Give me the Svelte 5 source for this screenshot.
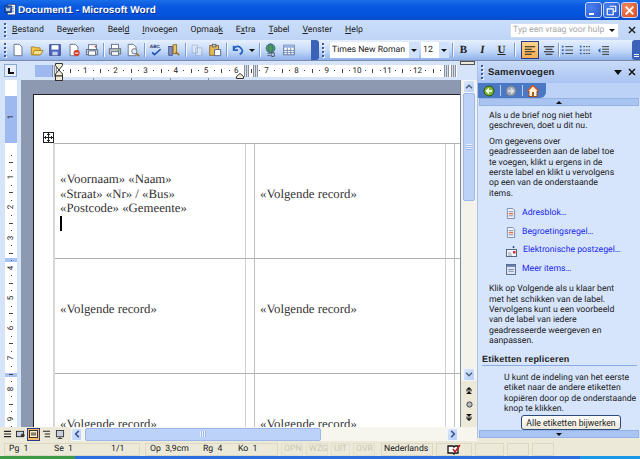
<script>
  const menus = [
    ['', 'B', 'estand'], ['Be', 'w', 'erken'], ['Beel', 'd', ''], ['', 'I', 'nvoegen'], ['Opmaa', 'k', ''],
    ['E', 'x', 'tra'], ['', 'T', 'abel'], ['', 'V', 'enster'], ['', 'H', 'elp'],
  ];
  const hnums = [1, 2, 3, 4, 5, 6, 7, 8, 9, 10, 11, 12];
  const step = 30.2;
  // quarter marks on the rulers, numbers sit on every fourth one
  const hticks = Array.from({ length: 52 }, (_, i) => i).filter((i) => i % 4 !== 0);
  const vticks = Array.from({ length: 44 }, (_, i) => i).filter((i) => i % 4 !== 0);
  const rows = [
    ['first', 'next', 'edge'],
    ['next', 'next', 'edge'],
    ['next', 'next', 'edge'],
  ];
  const links = [
    { label: 'Adresblok…', kind: 'doc' },
    { label: 'Begroetingsregel…', kind: 'doc' },
    { label: 'Elektronische postzegel…', kind: 'stamp' },
    { label: 'Meer items…', kind: 'more' },
  ];
  const locks = [
    { text: 'OPN', width: 22 },
    { text: 'WZG', width: 22 },
    { text: 'UIT', width: 19 },
    { text: 'OVR', width: 22 },
  ];
</script>

{#snippet grip()}
  <span class="grip"><i></i><i></i><i></i><i></i></span>
{/snippet}

<div class="window">
  <header class="title">
    <svg width="13" height="14" viewBox="0 0 16 16">
      <rect x="4" y="1" width="10" height="13" fill="#fff" stroke="#26407a"/>
      <path d="M6 4h6M6 6h6M6 8h6M6 10h6" stroke="#5a78b0"/>
      <rect x="1" y="3" width="8" height="8" fill="#2a5cb0" stroke="#12306a"/>
      <path d="M2.5 5l1.3 4 1.2-3 1.2 3 1.3-4" fill="none" stroke="#fff"/>
    </svg>
    <span class="title-text">Document1 - Microsoft Word</span>
    <div class="win-btns">
      <span class="wb"><i class="min"></i></span>
      <span class="wb"><svg width="11" height="11" viewBox="0 0 13 13"><path d="M4.5 1.5h7v6h-2M1.5 4.5h7v7h-7z" fill="none" stroke="#fff" stroke-width="1.4"/></svg></span>
      <span class="wb close"><svg width="11" height="11" viewBox="0 0 13 13"><path d="M2 2l9 9M11 2l-9 9" stroke="#fff" stroke-width="2.2"/></svg></span>
    </div>
  </header>

  <nav class="menu">
    {@render grip()}
    {#each menus as [a, k, b]}
      <span class="mi">{a}<u>{k}</u>{b}</span>
    {/each}
    <span class="help-box"><span>Typ een vraag voor hulp</span><b class="dd"></b></span>
    <svg class="menu-x" width="8" height="8" viewBox="0 0 9 9"><path d="M1 1l7 7M8 1l-7 7" stroke="#222" stroke-width="1.6"/></svg>
  </nav>

  <div class="toolbar">
    {@render grip()}
    <div class="tools std">
      <svg width="14" height="14" viewBox="0 0 16 16"><path d="M3.5 1.5h6l3 3v10h-9z" fill="#fff" stroke="#5a6a80"/></svg>
      <svg width="14" height="14" viewBox="0 0 16 16"><path d="M1.5 13.5v-9h4l1 1h5v8z" fill="#f5c84c" stroke="#a67a18"/><path d="M3 13.5l2-5h10l-3 5z" fill="#fbe08c" stroke="#a67a18"/></svg>
      <svg width="14" height="14" viewBox="0 0 16 16"><rect x="2" y="2" width="12" height="12" fill="#5068c0" stroke="#2c3a80"/><rect x="4" y="2.5" width="8" height="5" fill="#fff"/><rect x="5" y="10" width="6" height="4" fill="#c8d0e8"/></svg>
      <svg width="14" height="14" viewBox="0 0 16 16"><path d="M3.5 1.5h6l3 3v10h-9z" fill="#fff" stroke="#5a6a80"/><circle cx="11" cy="11.5" r="3.5" fill="#d83a28"/><rect x="9" y="11" width="4" height="1.2" fill="#fff"/></svg>
      <svg width="14" height="14" viewBox="0 0 16 16"><rect x="4" y="2" width="9" height="6" fill="#fff" stroke="#5a6a80"/><rect x="1.5" y="7.5" width="13" height="6" fill="#c0c8d8" stroke="#5a6a80"/><rect x="4" y="9" width="8" height="5" fill="#fff" stroke="#5a6a80"/><circle cx="12" cy="4" r="1" fill="#d83a28"/></svg>
      <i class="sep"></i>
      <svg width="14" height="14" viewBox="0 0 16 16"><rect x="4" y="1.5" width="8" height="6" fill="#fff" stroke="#606a7a"/><rect x="1.5" y="6.5" width="13" height="6" fill="#b8bec8" stroke="#606a7a"/><rect x="4" y="10" width="8" height="4" fill="#fff" stroke="#606a7a"/><circle cx="12" cy="8.5" r="1" fill="#30b030"/></svg>
      <svg width="14" height="14" viewBox="0 0 16 16"><path d="M2.5 1.5h6l3 3v10h-9z" fill="#fff" stroke="#5a6a80"/><circle cx="9.5" cy="9.5" r="3" fill="#dcebff" stroke="#6a6a6a"/><path d="M12 12l3 3" stroke="#a06a20" stroke-width="2"/></svg>
      <i class="sep"></i>
      <svg width="14" height="14" viewBox="0 0 18 16"><text x="1" y="6" font-size="6" font-family="Liberation Sans" font-weight="700" fill="#1c2a60">ABC</text><path d="M4 11l3 3 8-7" fill="none" stroke="#2050b0" stroke-width="2"/></svg>
      <svg width="14" height="14" viewBox="0 0 16 16"><rect x="2" y="4" width="4" height="10" fill="#8890c8" stroke="#40487a"/><rect x="7" y="2" width="4" height="10" fill="#e8c468" stroke="#8a6a20"/><path d="M10 10l4 4" stroke="#a07020" stroke-width="2"/></svg>
      <i class="sep"></i>
      <svg class="off" width="14" height="14" viewBox="0 0 16 16"><path d="M2.5 2.5h6v9h-6zM6.5 5.5h7v9h-7z" fill="#eef2fa" stroke="#8a9ab4"/></svg>
      <svg width="14" height="14" viewBox="0 0 16 16"><rect x="2" y="3" width="10" height="11" fill="#e8b850" stroke="#80602a"/><rect x="5" y="1.5" width="4" height="3" fill="#c8c8c8" stroke="#606060"/><path d="M7.5 7.5h7v7h-7z" fill="#fff" stroke="#4a5a80"/></svg>
      <i class="sep"></i>
      <svg width="14" height="14" viewBox="0 0 16 16"><path d="M3 8a4.5 4.5 0 0 1 7.5-3L13 8M3 3v5h5M13 8a5 5 0 0 1-3 5" fill="none" stroke="#2a64c0" stroke-width="2"/></svg>
      <b class="dd"></b>
      <i class="sep"></i>
      <svg width="14" height="14" viewBox="0 0 16 16"><circle cx="7.5" cy="6" r="5" fill="#4f9c58" stroke="#2e6090"/><ellipse cx="7.5" cy="6" rx="2.2" ry="5" fill="none" stroke="#2e6090" stroke-width=".7"/><path d="M4 12a2 2 0 0 1 3 0M8 13a2 2 0 0 1 4 0M4 14a2 2 0 0 0 3 0M8 13.5a2 2 0 0 0 4 0" fill="none" stroke="#505a68" stroke-width="1.2"/></svg>
      <svg width="14" height="14" viewBox="0 0 16 16"><rect x="2" y="2.5" width="12" height="11" fill="#fff" stroke="#50658a"/><rect x="2" y="2.5" width="12" height="3" fill="#9ab4de"/><path d="M2 8.5h12M2 11h12M6 5.5v8M10 5.5v8" stroke="#6a82aa"/></svg>
    </div>
    <span class="more"></span>
    {@render grip()}
    <span class="combo font"><span>Times New Roman</span><span class="drop"><b class="dd"></b></span></span>
    <span class="combo size"><span>12</span><span class="drop"><b class="dd"></b></span></span>
    <i class="sep plain"></i>
    <div class="tools fmt">
      <span class="fb bold">B</span>
      <span class="fb ital">I</span>
      <span class="fb und">U</span>
      <i class="sep plain"></i>
      <span class="active"><svg width="12" height="11" viewBox="0 0 14 12"><path d="M1 1.5h12M1 4.5h8M1 7.5h12M1 10.5h8" stroke="#222" stroke-width="1.2"/></svg></span>
      <svg width="12" height="11" viewBox="0 0 14 12"><path d="M1 1.5h12M3 4.5h8M1 7.5h12M3 10.5h8" stroke="#222" stroke-width="1.2"/></svg>
      <i class="sep tight"></i>
      <svg width="12" height="11" viewBox="0 0 14 12"><path d="M5 1.5h9M5 5.5h9M5 9.5h9" stroke="#444" stroke-width="1.1"/><path d="M1 .5h2v2H1zM1 4.5h2v2H1zM1 8.5h2v2H1z" fill="#2a64c0"/></svg>
      <svg width="12" height="11" viewBox="0 0 14 12"><path d="M5 1.5h9M5 5.5h9M5 9.5h9" stroke="#444" stroke-width="1.1" stroke-dasharray="2 1"/><path d="M1 .5h2v2H1zM1 4.5h2v2H1zM1 8.5h2v2H1z" fill="#2a64c0"/></svg>
      <svg width="12" height="11" viewBox="0 0 14 12"><path d="M6 1.5h8M6 4.5h8M6 7.5h8M6 10.5h8" stroke="#333" stroke-width="1.1"/><path d="M1 6l3-3v6z" fill="#2a64c0"/></svg>
    </div>
    <span class="more end"><i></i><i></i></span>
  </div>

  <div class="main">
    <div class="doc">
      <div class="ruler-row">
        <span class="tab-stop"><svg width="8" height="8" viewBox="0 0 8 8"><path d="M2 1v5h5" fill="none" stroke="#111" stroke-width="2"/></svg></span>
        <div class="hruler">
          <div class="hr-margin"></div>
          {#each hnums as n}
            <span class="hr-num" style:left="{n * step + 20}px">{n}</span>
          {/each}
          {#each hticks as i}
            <i class="hr-tick" class:long={i % 4 === 2} style:left="{(i / 4) * step + 20}px"></i>
          {/each}
          {#each [58, 96, 135, 173] as x}
            <i class="tabmark" style:left="{x}px"></i>
          {/each}
          <span class="cell-mark" style:left="17px"></span>
          <span class="cell-mark" style:left="209px"></span>
          <span class="cell-mark" style:left="218px"></span>
          <span class="cell-mark" style:left="409px"></span>
          <span class="cell-mark" style:left="416px"></span>
          <svg class="hourglass" width="8" height="18" viewBox="0 0 8 18"><path d="M.5.5h7v2L4 7 .5 2.500zM4 7l3.500 4v2h-7v-2z" fill="#f2ecd6" stroke="#333"/><rect x=".5" y="13" width="7" height="4.500" fill="#f2ecd6" stroke="#333"/></svg>
          <svg class="rindent" width="8" height="6" viewBox="0 0 8 6"><path d="M.5 5.500v-2L4 .5l3.500 3v2z" fill="#f2ecd6" stroke="#333"/></svg>
        </div>
        <span class="split"></span>
      </div>

      <div class="doc-mid">
        <div class="vruler">
          <div class="vr-margin"></div>
          <div class="vr-row" style:top="178px"></div>
          <div class="vr-row" style:top="293px"></div>
          <span class="vr-num" style:top="18px">1</span>
          {#each [1, 2, 3, 4, 5, 6, 7, 8, 9] as n}
            <span class="vr-num" style:top="{n * step + 48}px">{n}</span>
          {/each}
          {#each vticks as i}
            <i class="vr-tick" class:long={i % 4 === 2} style:top="{(i / 4) * step + 48}px"></i>
          {/each}
        </div>
        <div class="view">
          <div class="sheet">
            <span class="move">
              <svg width="9" height="9" viewBox="0 0 9 9"><path d="M4.500 0v9M0 4.500h9M3 1.500h3M3 7.500h3M1.500 3v3M7.500 3v3" stroke="#222"/></svg>
            </span>
            <div class="labels">
              {#each rows as row}
                {#each row as cell}
                  <div class="label {cell}">
                    {#if cell === 'first'}
                      <p>«Voornaam» «Naam»</p>
                      <p>«Straat» «Nr» / «Bus»</p>
                      <p>«Postcode» «Gemeente»</p>
                      <i class="caret"></i>
                    {:else if cell === 'next'}
                      <p>«Volgende record»</p>
                    {:else}
                      <p>«</p>
                    {/if}
                  </div>
                {/each}
              {/each}
            </div>
          </div>
        </div>
        <div class="vscroll">
          <span class="sb-btn"><svg width="8" height="5" viewBox="0 0 9 6"><path d="M1 5l3.500-3.500L8 5" fill="none" stroke="#4d6185" stroke-width="1.800"/></svg></span>
          <span class="sb-thumb"><i></i></span>
          <span class="sb-track"></span>
          <span class="sb-btn"><svg width="8" height="5" viewBox="0 0 9 6"><path d="M1 1l3.500 3.500L8 1" fill="none" stroke="#4d6185" stroke-width="1.800"/></svg></span>
          <div class="browse">
            <svg width="6" height="7" viewBox="0 0 7 8"><path d="M3.500 0L7 3H0zM0 4h7v1H0zM3.500 5L7 8H0z" fill="#111"/></svg>
            <svg width="7" height="7" viewBox="0 0 8 8"><circle cx="4" cy="4" r="3" fill="#b4bcc8" stroke="#333"/></svg>
            <svg width="6" height="7" viewBox="0 0 7 8"><path d="M0 0h7L3.500 3zM0 3h7v1H0zM0 5h7L3.500 8z" fill="#111"/></svg>
          </div>
        </div>
      </div>

      <div class="hscroll">
        <div class="views">
          <svg width="9" height="8" viewBox="0 0 10 9"><path d="M1 1.500h8M1 4.500h8M1 7.500h8" stroke="#222" stroke-width="1.300"/></svg>
          <svg width="9" height="8" viewBox="0 0 10 9"><rect x=".5" y="1.500" width="8" height="6" fill="#c8d0e0" stroke="#222"/><circle cx="7.500" cy="6" r="2" fill="#333"/></svg>
          <span class="view-on"><svg width="9" height="8" viewBox="0 0 10 9"><rect x=".5" y=".5" width="9" height="8" fill="#fff0c8" stroke="#222"/><path d="M2 3.500h6M2 5.500h6" stroke="#222"/></svg></span>
          <svg width="9" height="8" viewBox="0 0 10 9"><path d="M1 1.500h8M3 4.500h6M3 7.500h6" stroke="#222" stroke-width="1.200"/></svg>
          <svg width="10" height="9" viewBox="0 0 11 10"><rect x="1.500" y=".5" width="8" height="7" fill="#c8d0e0" stroke="#333"/><path d="M3 9.500h5M5.500 7.500v2" stroke="#333"/></svg>
        </div>
        <span class="sb-btn h"><svg width="6" height="8" viewBox="0 0 6 9"><path d="M5 1L1.500 4.500 5 8" fill="none" stroke="#3a5590" stroke-width="1.800"/></svg></span>
        <span class="h-thumb"><i></i></span>
        <span class="h-rest"></span>
        <span class="sb-btn h"><svg width="6" height="8" viewBox="0 0 6 9"><path d="M1 1l3.500 3.500L1 8" fill="none" stroke="#3a5590" stroke-width="1.800"/></svg></span>
      </div>
    </div>

    <aside class="pane">
      <div class="pane-head">
        {@render grip()}
        <strong>Samenvoegen</strong>
        <svg width="8" height="5" viewBox="0 0 8 5"><path d="M0 0h8L4 5z" fill="#111"/></svg>
        <svg width="8" height="8" viewBox="0 0 8 8"><path d="M1 1l6 6M7 1L1 7" stroke="#111" stroke-width="1.500"/></svg>
      </div>
      <div class="pane-tabs">
        <div class="tabbar">
          <svg width="12" height="12" viewBox="0 0 12 12"><circle cx="6" cy="6" r="5" fill="#7cb832" stroke="#2c5010"/><path d="M9 6H4M6 3.500L3.500 6 6 8.500" fill="none" stroke="#fff" stroke-width="1.400"/></svg>
          <i></i>
          <svg width="12" height="12" viewBox="0 0 12 12"><circle cx="6" cy="6" r="5" fill="#a0aab8" stroke="#707888"/><path d="M3 6h5M6 3.500L8.500 6 6 8.500" fill="none" stroke="#dfe4ea" stroke-width="1.400"/></svg>
          <i></i>
          <svg width="12" height="12" viewBox="0 0 12 12"><path d="M6 .5L.5 6H2v5.500h8V6h1.500z" fill="#fff4d8" stroke="#a04a18"/><path d="M.5 6L6 .5 11.500 6" fill="none" stroke="#d85a20" stroke-width="1.300"/><rect x="5" y="7" width="2" height="4.500" fill="#a06020"/></svg>
        </div>
      </div>
      <div class="pane-arrow"><b class="up"></b></div>
      <div class="pane-body">
        <div class="pane-text">
          <p>Als u de brief nog niet hebt geschreven, doet u dit nu.</p>
          <p>Om gegevens over<br>geadresseerden aan de label toe<br>te voegen, klikt u ergens in de<br>eerste label en klikt u vervolgens<br>op een van de onderstaande<br>items.</p>
        </div>
        <ul>
          {#each links as l}
            <li>
              {#if l.kind === 'doc'}
                <svg width="10" height="11" viewBox="0 0 11 12"><path d="M1.500 .5h6l2 2v9h-8z" fill="#eef2fa" stroke="#7a8aa8"/><path d="M3 4h5M3 8.500h5" stroke="#7a8aa8"/><path d="M3 6.200h5" stroke="#e8703a" stroke-width="1.400"/></svg>
              {:else if l.kind === 'stamp'}
                <svg width="11" height="12" viewBox="0 0 11 12"><path d="M7.500 1v2" stroke="#2a4a90" stroke-width="1.500"/><rect x=".5" y="4.500" width="10" height="7" fill="#f4f6fb" stroke="#56688a"/><path d="M2 8h3M2 10h4" stroke="#8a9ab4"/><rect x="7" y="6" width="2.500" height="2.500" fill="#d83030"/></svg>
              {:else}
                <svg width="10" height="11" viewBox="0 0 11 12"><rect x=".5" y=".5" width="10" height="11" fill="#dfe5f2" stroke="#56688a"/><rect x="1" y="1" width="9" height="2" fill="#5a78b0"/><path d="M2.500 6h6M2.500 8h6" stroke="#7a8aa8"/></svg>
              {/if}
              <span>{l.label}</span>
            </li>
          {/each}
        </ul>
        <div class="pane-text">
          <p>Klik op Volgende als u klaar bent met het schikken van de label. Vervolgens kunt u een voorbeeld van de label van iedere geadresseerde weergeven en aanpassen.</p>
        </div>
        <h3>Etiketten repliceren</h3>
        <p class="indent-p">U kunt de indeling van het eerste etiket naar de andere etiketten kopiëren door op de onderstaande knop te klikken.</p>
        <button>Alle etiketten bijwerken</button>
      </div>
      <div class="pane-arrow"><b class="down"></b></div>
    </aside>
  </div>

  <footer class="status">
    <span class="s-cell wide">
      <span>Pg&nbsp; 1</span><span>Se&nbsp; 1</span><span>1/1</span>
    </span>
    <span class="s-cell mid">
      <span>Op&nbsp; 3,9cm</span><span>Rg&nbsp; 4</span><span>Ko&nbsp; 1</span>
    </span>
    {#each locks as c}
      <span class="s-cell off" style:width="{c.width}px">{c.text}</span>
    {/each}
    <span class="s-cell lang">Nederlands</span>
    <span class="s-cell book">
      <svg width="15" height="11" viewBox="0 0 15 11"><path d="M1 2h5l1 1 1-1h3v7H8l-1 1-1-1H1z" fill="#fff" stroke="#111" stroke-width="1.300"/><path d="M6 5l2 3 5-7" fill="none" stroke="#c01818" stroke-width="1.500"/></svg>
    </span>
    <span class="s-cell blank"></span>
    <span class="s-cell blank s"></span>
    <span class="s-cell blank s"></span>
  </footer>
  <div class="taskstrip"><i></i><em></em></div>
</div>

<style>
  :global(body) {
    margin: 0;
    background: #ece9d8;
  }
  .window {
    width: 640px;
    height: 459px;
    overflow: hidden;
    display: flex;
    flex-direction: column;
    font-family: Roboto, sans-serif;
    font-size: 8.7px;
    color: #222;
    text-rendering: geometricPrecision;
  }
  svg { flex: none; display: block; }
  .title {
    height: 20px;
    flex: none;
    display: flex;
    align-items: center;
    padding-left: 4px;
    gap: 1px;
    background: linear-gradient(#1a6ee8, #0a5ae0 30%, #0454e0 70%, #0a4cc8);
    color: #fff;
  }
  .title-text {
    font: 700 10px "Liberation Sans", sans-serif;
    letter-spacing: .05px;
    text-shadow: 1px 1px #0a3090;
  }
  .win-btns {
    margin-left: auto;
    margin-right: 2px;
    display: flex;
    gap: 1px;
  }
  .wb {
    width: 17px;
    height: 16px;
    box-sizing: border-box;
    display: flex;
    align-items: center;
    justify-content: center;
    border: 1px solid #c8d8f8;
    border-radius: 3px;
    background: radial-gradient(circle at 30% 30%, #4a80ee, #2858d0);
  }
  .wb.close { background: radial-gradient(circle at 30% 30%, #f08a60, #d8481c); }
  .wb .min { width: 5px; height: 2px; background: #fff; margin: 7px 5px 0 0; }

  .menu {
    height: 20px;
    flex: none;
    display: flex;
    align-items: center;
    padding-left: 4px;
    background: linear-gradient(#cadefa, #c0d5f6);
  }
  .grip { display: inline-flex; flex-direction: column; gap: 2px; width: 3px; margin-right: 5px; flex: none; }
  .grip i { width: 2px; height: 2px; background: #3e5a94; box-shadow: 1px 1px #f4f8ff; }
  .mi { margin-right: 13px; white-space: nowrap; }
  .help-box {
    margin-left: auto;
    width: 109px;
    height: 15px;
    background: #fff;
    color: #a8a8a8;
    display: flex;
    align-items: center;
    padding-left: 2px;
    box-sizing: border-box;
    white-space: nowrap;
    border: 1px solid #d0def4;
  }
  .dd {
    width: 0;
    height: 0;
    border: 3px solid transparent;
    border-top: 3px solid #111;
    border-bottom: 0;
    display: block;
    flex: none;
  }
  .help-box .dd { margin-left: auto; margin-right: 3px; }
  .menu-x { margin: 0 4px 0 9px; }

  .toolbar {
    height: 21px;
    flex: none;
    display: flex;
    align-items: center;
    padding-left: 4px;
    background: linear-gradient(#e6f0fe, #c2d8f8 55%, #8eb0ea);
    border-bottom: 1px solid #7a8aa8;
    box-sizing: border-box;
  }
  .tools { display: flex; align-items: center; gap: 4.500px; }
  .sep { width: 1px; height: 14px; background: #7a9ad0; box-shadow: 1px 0 #f4f8ff; flex: none; margin: 0 -.75px; }
  .sep.plain { margin: 0; }
  .sep.tight { margin: 0 -3.500px; }
  .off { opacity: .55; }
  .std { width: 300px; flex: none; margin-left: -1px; }
  .more { width: 8px; height: 20px; background: #3a62b8; flex: none; margin-right: 3px; border-radius: 0 3px 3px 0; }
  .more.end { margin: 0 0 0 auto; display: flex; flex-direction: column; align-items: center; justify-content: flex-end; gap: 1px; padding-bottom: 3px; box-sizing: border-box; border-radius: 3px 0 0 3px; }
  .more.end i { width: 5px; height: 1px; background: #fff; }
  .combo {
    height: 16px;
    background: #fff;
    display: flex;
    align-items: center;
    box-sizing: border-box;
    padding-left: 2px;
    white-space: nowrap;
  }
  .drop {
    margin-left: auto;
    width: 10px;
    height: 100%;
    display: flex;
    align-items: center;
    justify-content: center;
    background: #cfe0fa;
  }
  .combo.font { width: 89px; margin-right: 2px; }
  .combo.size { width: 28px; margin-right: 3px; }
  .fmt { margin-left: 4px; gap: 6px; }
  .fb { width: 13px; text-align: center; font: 700 11px "Liberation Serif", serif; color: #222; }
  .fb.ital { font-style: italic; }
  .fb.und { text-decoration: underline; }
  .active {
    width: 18px;
    height: 18px;
    box-sizing: border-box;
    display: flex;
    align-items: center;
    justify-content: center;
    background: linear-gradient(#fdd58c, #f8ae52);
    border: 1px solid #2a3a8a;
    margin-right: -2px;
  }

  .main { flex: 1; display: flex; min-height: 0; }
  .doc { flex: 1; min-width: 0; display: flex; flex-direction: column; background: #d6e4fa; }
  .ruler-row {
    height: 19px;
    flex: none;
    display: flex;
    align-items: center;
    padding-left: 4px;
  }
  .tab-stop {
    width: 13px;
    height: 13px;
    display: flex;
    align-items: center;
    justify-content: center;
    box-sizing: border-box;
    border: 1px solid #8aa8d8;
    background: #e8f0fe;
  }
  .hruler {
    position: relative;
    margin-left: 18px;
    width: 422px;
    height: 12px;
    background: #fff;
    font-size: 8px;
  }
  .hr-margin { position: absolute; left: 0; top: 0; bottom: 0; width: 19px; background: #9db9ef; }
  .hr-num { position: absolute; top: 0; line-height: 12px; width: 10px; margin-left: -5px; text-align: center; }
  .hr-tick { position: absolute; top: 5.500px; width: 1px; height: 1px; background: #444; }
  .hr-tick.long { top: 4px; height: 4px; }
  .tabmark { position: absolute; top: 13px; width: 1px; height: 2px; background: #8a8a8a; }
  .hourglass { position: absolute; left: 20px; top: -2px; }
  .rindent { position: absolute; left: 201px; top: 8px; }
  .cell-mark { position: absolute; top: 0; bottom: 0; width: 5px; background: repeating-linear-gradient(90deg, #8a9098 0 1px, #d4deef 1px 2px); }
  .split { width: 15px; height: 4px; margin-left: 3px; background: #ece9d8; border: 1px solid #555; box-sizing: border-box; align-self: flex-start; }

  .doc-mid { flex: 1; display: flex; min-height: 0; }
  .vruler { width: 21px; flex: none; position: relative; overflow: hidden; background: linear-gradient(90deg, #d6e4fa 5px, #fff 5px, #fff 17px, #d6e4fa 17px); font-size: 8px; }
  .vr-margin { position: absolute; left: 5px; top: 16px; width: 12px; height: 47px; background: #9db9ef; }
  .vr-row { position: absolute; left: 5px; width: 12px; height: 4px; background: #a9c2f2; }
  .vr-num { position: absolute; left: 5px; width: 12px; text-align: center; line-height: 10px; margin-top: 14px; transform: rotate(-90deg); }
  .vr-tick { position: absolute; left: 10.500px; width: 1px; height: 1px; margin-top: 19px; background: #444; }
  .vr-tick.long { left: 9px; width: 4px; }
  .view { flex: 1; min-width: 0; background: #8d99b1; padding: 14px 0 0 12px; overflow: hidden; border-right: 1px solid #7a8aa0; box-sizing: border-box; }
  .sheet {
    background: #fff;
    border-left: 1px solid #222;
    border-top: 1px solid #222;
    height: 400px;
    padding: 48px 0 0 19px;
    position: relative;
    box-sizing: border-box;
  }
  .move {
    position: absolute;
    left: 9px;
    top: 37px;
    width: 11px;
    height: 11px;
    border: 1px solid #222;
    box-sizing: border-box;
    background: #fff;
    display: flex;
    align-items: center;
    justify-content: center;
  }
  .labels {
    display: grid;
    grid-template-columns: 200px 200px 40px;
    grid-auto-rows: 115px;
    border-top: 1px solid #b0b0b0;
    border-left: 2px solid #d8d8d8;
  }
  .label {
    box-sizing: border-box;
    border-right: 1px solid #c0c0c0;
    border-bottom: 1px solid #b0b0b0;
    box-shadow: inset -8px 0 #fff, inset -9px 0 #d0d0d0;
    padding: 43px 0 0 5px;
    font: 12.800px/14.500px "Liberation Serif", serif;
    color: #333;
  }
  .label.first { padding-top: 28px; }
  .label p { margin: 0; white-space: nowrap; }
  .caret { display: block; width: 2px; height: 15px; background: #000; }
  .vscroll { width: 16px; flex: none; background: #f4f3ea; display: flex; flex-direction: column; align-items: center; }
  .sb-btn {
    width: 12px;
    height: 13px;
    flex: none;
    display: flex;
    align-items: center;
    justify-content: center;
    background: linear-gradient(135deg, #dbe8fc, #b6cdf6);
    border: 1px solid #f0f6ff;
    box-sizing: border-box;
    border-radius: 2px;
  }
  .sb-thumb { width: 12px; height: 108px; flex: none; background: #bcd2f8; border: 1px solid #9cb8e8; box-sizing: border-box; border-radius: 2px; display: flex; align-items: center; justify-content: center; }
  .sb-thumb i { width: 6px; height: 6px; background: repeating-linear-gradient(#eef4ff 0 1px, #9cb8e8 1px 2px); }
  .sb-track { flex: 1; }
  .browse { height: 46px; width: 16px; flex: none; display: flex; flex-direction: column; align-items: center; justify-content: space-evenly; background: #ece9d8; }

  .hscroll { height: 14px; flex: none; display: flex; align-items: center; background: #f6f5ee; }
  .views { display: flex; align-items: center; width: 71px; padding-left: 3px; gap: 4px; box-sizing: border-box; flex: none; background: #ece9d8; height: 100%; }
  .view-on { width: 13px; height: 13px; flex: none; box-sizing: border-box; border: 1px solid #2a3a8a; background: #f8b868; display: flex; align-items: center; justify-content: center; margin: 0 -2px; }
  .sb-btn.h { width: 11px; height: 13px; }
  .h-thumb { width: 236px; height: 13px; flex: none; margin-left: 3px; background: #bcd2f8; border: 1px solid #9cb8e8; box-sizing: border-box; border-radius: 2px; display: flex; justify-content: center; align-items: center; }
  .h-thumb i { width: 6px; height: 6px; background: repeating-linear-gradient(90deg, #eef4ff 0 1px, #9cb8e8 1px 2px); }
  .h-rest { flex: 1; }
  .hscroll > .sb-btn:last-child { margin-right: 19px; }

  .pane {
    width: 163px;
    flex: none;
    display: flex;
    flex-direction: column;
    background: #d6e5fc;
    border-left: 1px solid #a8c0ea;
    box-sizing: border-box;
    margin-bottom: 3px;
  }
  .pane-head {
    height: 22px;
    flex: none;
    display: flex;
    align-items: center;
    gap: 3px;
    padding: 0 4px 0 3px;
    background: linear-gradient(#c9dcf9, #a9c4f2);
  }
  .pane-head .grip { margin-right: 1px; }
  .pane-head strong { font: 700 9.500px "Liberation Sans", sans-serif; letter-spacing: .2px; margin-right: auto; }
  .pane-head svg { margin-left: 3px; }
  .pane-tabs { height: 15px; flex: none; background: #bcd2f6; }
  .tabbar {
    width: 68px;
    height: 100%;
    display: flex;
    align-items: center;
    gap: 4.500px;
    padding-left: 5px;
    box-sizing: border-box;
    background: #4a78c4;
    border-radius: 0 0 6px 0;
  }
  .tabbar i { width: 1px; height: 11px; background: #b8ccee; }
  .pane-arrow { height: 8px; flex: none; background: #a9c4f0; display: flex; align-items: center; justify-content: center; border: 1px solid #94b2e6; box-sizing: border-box; margin: 0 1px; }
  .pane-arrow b { width: 0; height: 0; border: 3px solid transparent; }
  .pane-arrow .up { border-bottom: 3px solid #111; border-top: 0; }
  .pane-arrow .down { border-top: 3px solid #111; border-bottom: 0; }
  .pane-body { flex: 1; min-height: 0; padding: 5px 3px 0 4px; overflow: hidden; line-height: 10.400px; display: flex; flex-direction: column; }
  .pane-text { padding-left: 7px; width: 135px; }
  .pane-text p { margin: 0 0 5px; }
  ul { list-style: none; margin: 0 0 6px; padding: 0 0 0 24px; }
  li { display: flex; align-items: center; gap: 6px; height: 18.500px; color: #1c2af0; white-space: nowrap; }
  h3 { margin: 2px 0 0; font: 700 9px "Liberation Sans", sans-serif; letter-spacing: .2px; border-bottom: 1px solid #8aaae8; padding-bottom: 1px; }
  .indent-p { margin: 7px 0 1px 22px; }
  button {
    align-self: flex-end;
    margin-right: 16px;
    width: 100px;
    height: 15px;
    flex: none;
    padding: 0;
    font: 8.700px Roboto, sans-serif;
    color: #222;
    border: 1px solid #2d4a80;
    border-radius: 3px;
    background: linear-gradient(#fff, #ece9d8);
  }

  .status {
    height: 15px;
    flex: none;
    display: flex;
    align-items: center;
    gap: 3px;
    padding: 1px 0 0 4px;
    box-sizing: border-box;
    background: #ece9d8;
  }
  .s-cell { height: 13px; border: 1px solid #dcd8c2; box-sizing: border-box; display: flex; align-items: center; flex: none; padding-left: 4px; white-space: nowrap; }
  .s-cell.wide { width: 136px; margin-right: 2px; }
  .s-cell.wide span:nth-child(1) { width: 45px; }
  .s-cell.wide span:nth-child(2) { width: 57px; }
  .s-cell.mid { width: 133px; }
  .s-cell.mid span:nth-child(1) { width: 53px; }
  .s-cell.mid span:nth-child(2) { width: 35px; }
  .s-cell.off { color: #b0ae9e; padding-left: 2px; }
  .s-cell.lang { width: 52px; padding-left: 2px; margin-left: 3px; }
  .s-cell.book { width: 36px; justify-content: center; padding: 0; }
  .s-cell.blank { width: 29px; }
  .s-cell.blank.s { width: 22px; }
  .taskstrip { height: 3px; flex: none; background: #2a6ee0; display: flex; }
  .taskstrip i { width: 75px; background: #3e9a44; }
  .taskstrip em { width: 60px; margin-left: auto; background: #1a98e8; }
</style>
